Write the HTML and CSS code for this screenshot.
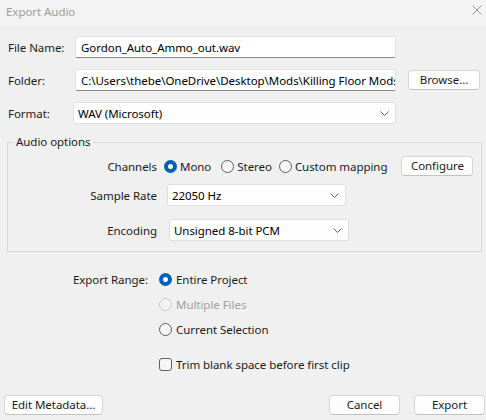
FILE: index.html
```html
<!DOCTYPE html>
<html>
<head>
<meta charset="utf-8">
<link rel="stylesheet" href="styles.css">
</head>
<body>
<div class="dialog">
  <div class="titlebar">
    <span class="title">Export Audio</span>
    <svg class="close" width="10" height="10" viewBox="0 0 10 10"><path d="M0.5 0.5 L9.5 9.5 M9.5 0.5 L0.5 9.5" stroke="#9a9a9a" stroke-width="1" fill="none"/></svg>
  </div>
  <div class="content">
    <div class="row r-file">
      <span class="lbl">File Name:</span>
      <div class="input w-main pad-file">Gordon_Auto_Ammo_out.wav</div>
    </div>
    <div class="row r-folder">
      <span class="lbl">Folder:</span>
      <div class="input w-main pad-file">C:\Users\thebe\OneDrive\Desktop\Mods\Killing Floor Mods</div>
      <button class="btn btn-browse">Browse...</button>
    </div>
    <div class="row r-format">
      <span class="lbl lbl-format">Format:</span>
      <div class="select w-format"><span class="sel-text">WAV (Microsoft)</span><svg class="chev" width="9" height="5" viewBox="0 0 9 5"><path d="M0.5 0.5 L4.5 4.5 L8.5 0.5" stroke="#606060" stroke-width="1" fill="none"/></svg></div>
    </div>

    <fieldset class="group">
      <legend class="legend">Audio options</legend>
      <div class="grow g-channels">
        <span class="glbl">Channels</span>
        <span class="opt opt-mono"><span class="radio checked"></span>Mono</span>
        <span class="opt opt-stereo"><span class="radio"></span>Stereo</span>
        <span class="opt opt-custom"><span class="radio"></span>Custom mapping</span>
        <button class="btn btn-config">Configure</button>
      </div>
      <div class="grow g-rate">
        <span class="glbl">Sample Rate</span>
        <div class="select w-rate"><span class="sel-text">22050 Hz</span><svg class="chev" width="9" height="5" viewBox="0 0 9 5"><path d="M0.5 0.5 L4.5 4.5 L8.5 0.5" stroke="#606060" stroke-width="1" fill="none"/></svg></div>
      </div>
      <div class="grow g-enc">
        <span class="glbl">Encoding</span>
        <div class="select w-enc"><span class="sel-text">Unsigned 8-bit PCM</span><svg class="chev" width="9" height="5" viewBox="0 0 9 5"><path d="M0.5 0.5 L4.5 4.5 L8.5 0.5" stroke="#606060" stroke-width="1" fill="none"/></svg></div>
      </div>
    </fieldset>

    <div class="range">
      <div class="rrow">
        <span class="rlbl">Export Range:</span>
        <span class="radio checked"></span><span class="rtext">Entire Project</span>
      </div>
      <div class="rrow">
        <span class="rlbl"></span>
        <span class="radio disabled"></span><span class="rtext dim">Multiple Files</span>
      </div>
      <div class="rrow">
        <span class="rlbl"></span>
        <span class="radio"></span><span class="rtext">Current Selection</span>
      </div>
      <div class="rrow r-trim">
        <span class="rlbl"></span>
        <span class="check"></span><span class="rtext">Trim blank space before first clip</span>
      </div>
    </div>

    <div class="footer">
      <button class="btn btn-meta">Edit Metadata...</button>
      <span class="spacer"></span>
      <button class="btn btn-cancel">Cancel</button>
      <button class="btn btn-export">Export</button>
    </div>
  </div>
</div>
</body>
</html>
```

FILE: styles.css
```css
html, body {
  margin: 0;
  padding: 0;
  background: #f0f0f0;
}

body {
  font-family: "Noto Sans", "Open Sans", sans-serif;
  font-size: 11.5px;
  letter-spacing: -0.05px;
  color: #1b1b1b;
}

.dialog {
  width: 486px;
  height: 420px;
  overflow: hidden;
  background: #f0f0f0;
}

.titlebar {
  height: 25px;
  background: #f3f3f3;
  display: flex;
  align-items: center;
  padding: 0 4px 0 6px;
}

.title {
  color: #9b9b9b;
  flex: 1;
  margin-top: -3px;
}

.close {
  margin-top: -5px;
}

.content {
  display: flex;
  flex-direction: column;
}

.row {
  display: flex;
  align-items: center;
  height: 22px;
  padding-left: 8px;
}

.r-file { margin-top: 11px; }
.r-folder { margin-top: 11px; }
.r-format { margin-top: 11px; }

.lbl {
  width: 67px;
  flex: none;
}

.lbl-format { width: 65px; }

.input {
  box-sizing: border-box;
  height: 22px;
  background: #ffffff;
  border: 1px solid #e3e3e3;
  border-bottom: 1px solid #868686;
  border-radius: 3px 3px 2px 2px;
  display: flex;
  align-items: center;
  white-space: nowrap;
  overflow: hidden;
  color: #000;
}

.w-main { width: 321px; }
.pad-file { padding: 0 0 0 5px; }

.select {
  box-sizing: border-box;
  height: 22px;
  background: #fefefe;
  border: 1px solid #dfdfdf;
  border-radius: 3px;
  display: flex;
  align-items: center;
  padding: 0 6px 0 4px;
  color: #000;
}

.sel-text { flex: 1; white-space: nowrap; }
.chev { flex: none; }

.w-format { width: 323px; }

.btn {
  box-sizing: border-box;
  font-family: inherit;
  font-size: 11.5px;
  letter-spacing: -0.05px;
  color: #1b1b1b;
  background: #fdfdfd;
  border: 1px solid #d6d6d6;
  border-bottom-color: #c2c2c2;
  border-radius: 4px;
  height: 20px;
  padding: 0;
  line-height: 18px;
}

.btn-browse {
  width: 72px;
  margin-left: 12px;
}

.group {
  margin: 10px 0 0 7px;
  width: 475px;
  box-sizing: border-box;
  border: 1px solid #dadada;
  padding: 0 0 10px 0;
  min-width: 0;
}

.legend {
  margin-left: 5px;
  padding: 0 2px 0 3px;
  line-height: 16px;
}

.grow {
  display: flex;
  align-items: center;
}

.glbl {
  width: 149px;
  text-align: right;
  flex: none;
}

.g-channels {
  margin-top: 6px;
  height: 20px;
}

.opt {
  display: inline-flex;
  align-items: center;
  white-space: nowrap;
}

.opt .radio { margin-right: 3px; }
.opt-mono { margin-left: 7px; }
.opt-stereo { margin-left: 10px; }
.opt-custom { margin-left: 7px; }

.btn-config {
  width: 72px;
  height: 20px;
  margin-left: 14px;
}

.g-rate { margin-top: 8px; }
.g-enc { margin-top: 13px; }

.w-rate { width: 179px; margin-left: 10px; }
.w-enc { width: 180px; margin-left: 12px; }

.radio {
  box-sizing: border-box;
  width: 13px;
  height: 13px;
  border-radius: 50%;
  border: 1px solid #5f5f5f;
  background: #f6f6f6;
  flex: none;
  display: inline-block;
}

.radio.checked {
  border: 4px solid #005fb8;
  background: #ffffff;
}

.radio.disabled {
  border-color: #c9c9c9;
  background: #f3f3f3;
}

.check {
  box-sizing: border-box;
  width: 13px;
  height: 13px;
  border: 1px solid #5f5f5f;
  border-radius: 3px;
  background: #f6f6f6;
  flex: none;
}

.range {
  margin-top: 17px;
  display: flex;
  flex-direction: column;
  gap: 5px;
}

.rrow {
  display: flex;
  align-items: center;
  height: 20px;
}

.r-trim { margin-top: 10px; }

.rlbl {
  width: 148px;
  text-align: right;
  margin-right: 11px;
  flex: none;
}

.rtext {
  margin-left: 4px;
  white-space: nowrap;
}

.dim { color: #a0a0a0; }

.footer {
  display: flex;
  margin-top: 21px;
  padding: 0 1px 0 4px;
}

.spacer { flex: 1; }

.btn-meta { width: 99px; }
.btn-cancel { width: 71px; margin-right: 14px; }
.btn-export { width: 71px; }
```
